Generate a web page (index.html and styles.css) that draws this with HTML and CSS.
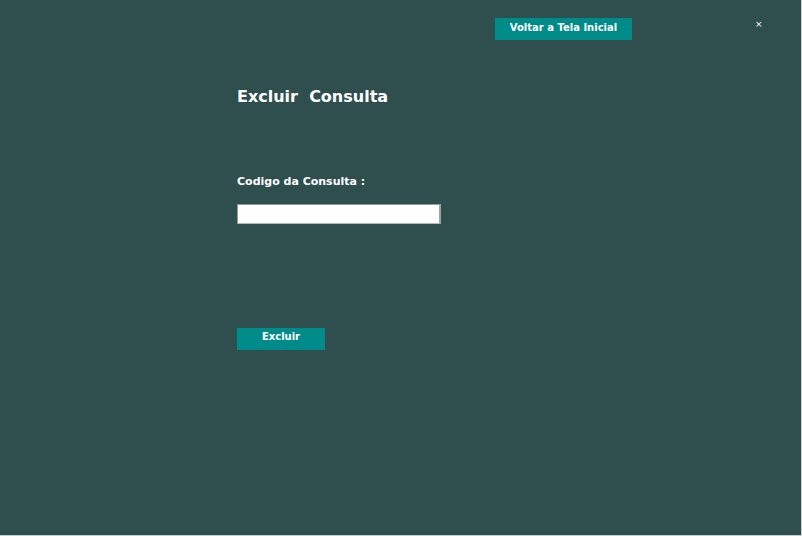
FILE: index.html
```html
<!DOCTYPE html>
<html>
<head>
<meta charset="utf-8">
<link rel="stylesheet" href="styles.css">
</head>
<body>
<div class="frame">
  <div class="topbar">
    <button class="btn btn-back">Voltar a Tela Inicial</button>
    <span class="close">×</span>
  </div>
  <div class="content">
    <h1 class="title">Excluir&nbsp; Consulta</h1>
    <label class="label" for="codigo">Codigo da Consulta :</label>
    <input class="field" id="codigo" type="text">
    <button class="btn btn-delete">Excluir</button>
  </div>
</div>
</body>
</html>
```
FILE: styles.css
```css
html, body {
  margin: 0;
  padding: 0;
  background: #2f4f4f;
}
body {
  width: 802px;
  height: 536px;
  overflow: hidden;
  font-family: "DejaVu Sans", sans-serif;
  color: #ffffff;
}
.frame {
  box-sizing: border-box;
  width: 802px;
  height: 536px;
  background: #2f4f4f;
  border-right: 1px solid #c8cccc;
  border-bottom: 1px solid #c8cccc;
  display: flex;
  flex-direction: column;
}
.topbar {
  display: flex;
  align-items: flex-start;
  padding: 18px 0 0 495px;
  height: 22px;
}
.btn {
  border: none;
  background: #008b8b;
  color: #ffffff;
  font-family: "DejaVu Sans", sans-serif;
  font-weight: bold;
  font-size: 10px;
  padding: 0;
  margin: 0;
  cursor: pointer;
}
.btn-back {
  width: 137px;
  height: 22px;
  line-height: 20px;
  padding-bottom: 2px;
}
.close {
  margin-left: 123px;
  margin-top: 0;
  font-size: 9px;
  line-height: 12px;
  font-weight: normal;
}
.content {
  display: flex;
  flex-direction: column;
  align-items: flex-start;
  padding-left: 237px;
}
.title {
  margin: 47px 0 0 0;
  font-size: 16px;
  font-weight: bold;
  line-height: 20px;
}
.label {
  margin-top: 68px;
  font-size: 11px;
  font-weight: bold;
  line-height: 14px;
}
.field {
  box-sizing: border-box;
  margin-top: 15px;
  width: 204px;
  height: 20px;
  background: #ffffff;
  border: 1px solid #8f9a9a;
  border-right: 2px solid #9aa4a4;
  border-bottom: 1px solid #b0b8b8;
  padding: 0 3px;
  outline: none;
}
.btn-delete {
  margin-top: 104px;
  width: 88px;
  height: 22px;
  line-height: 18px;
  padding-bottom: 4px;
}
```
